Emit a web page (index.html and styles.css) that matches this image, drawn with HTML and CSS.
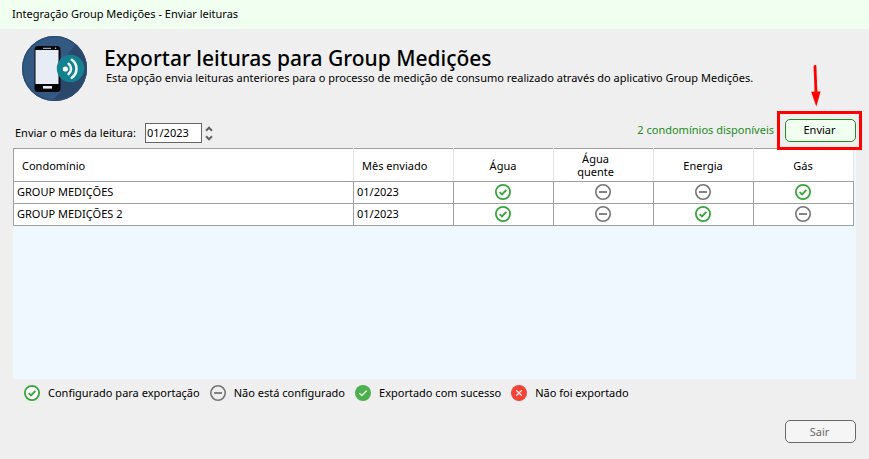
FILE: index.html
```html
<!DOCTYPE html>
<html lang="pt-BR">
<head>
<meta charset="utf-8">
<meta name="viewport" content="width=device-width, initial-scale=1">
<title>Integração Group Medições - Enviar leituras</title>
<link rel="stylesheet" href="styles.css">
</head>
<body>
<svg class="defs" aria-hidden="true">
  <symbol id="ready" viewBox="0 0 16 16"><circle cx="8" cy="8" r="7.1" fill="#fff" stroke="#36a53a" stroke-width="1.8"/><path d="M4.6 8.1 7 10.4l4.4-4.5" fill="none" stroke="#36a53a" stroke-width="1.9"/></symbol>
  <symbol id="unset" viewBox="0 0 16 16"><circle cx="8" cy="8" r="7.2" fill="none" stroke="#757575" stroke-width="1.6"/><path d="M4 8h8" stroke="#757575" stroke-width="1.8"/></symbol>
  <symbol id="done" viewBox="0 0 16 16"><circle cx="8" cy="8" r="8" fill="#4caf50"/><path d="M4.3 8.1 6.8 10.5l5-5" fill="none" stroke="#e2f5e3" stroke-width="1.3"/></symbol>
  <symbol id="failed" viewBox="0 0 16 16"><circle cx="8" cy="8" r="8" fill="#f44336"/><path d="m5.2 5.2 5.6 5.6m0-5.6-5.6 5.6" stroke="#ffe3e0" stroke-width="1.3"/></symbol>
</svg>
<header class="titlebar">Integração Group Medições - Enviar leituras</header>
<main class="window">
  <section class="intro">
    <svg class="logo" viewBox="0 0 65 65" aria-hidden="true">
      <defs><clipPath id="disc"><circle cx="32.5" cy="32.5" r="32.5"/></clipPath></defs>
      <circle cx="32.5" cy="32.5" r="32.5" fill="#335983"/>
      <path d="M38 28 54 8l14 20-6 40H28l10-12z" fill="#2b486b" clip-path="url(#disc)"/>
      <circle cx="32.5" cy="32.5" r="31.8" fill="none" stroke="#2b4d73" stroke-width="1.4"/>
      <rect x="12.5" y="10" width="26" height="46" rx="3.5" fill="#050609"/>
      <rect x="13.5" y="14" width="23" height="34" fill="#e8edf5"/>
      <path d="M21 12.3h8" stroke="#c9cdd3" stroke-width="1"/>
      <circle cx="33.5" cy="12.3" r=".8" fill="#c9cdd3"/>
      <rect x="21" y="50" width="9" height="2.6" fill="#e8edf5"/>
      <circle cx="48.5" cy="32.5" r="13.7" fill="#13818f"/>
      <circle cx="43.4" cy="33" r="2.6" fill="#fff"/>
      <path d="M46.6 27.8a6.5 6.5 0 0 1 0 10.2M49.8 23.8a11 11 0 0 1 0 18" fill="none" stroke="#eef8fa" stroke-width="2.6" stroke-linecap="round"/>
    </svg>
    <div class="heading">
      <h1>Exportar leituras para Group Medições</h1>
      <p>Esta opção envia leituras anteriores para o processo de medição de consumo realizado através do aplicativo Group Medições.</p>
    </div>
  </section>
  <section class="toolbar">
    <label for="month">Enviar o mês da leitura:</label>
    <input id="month" type="text" value="01/2023">
    <div class="spinner">
      <button type="button" aria-label="Próximo mês"><svg viewBox="0 0 8 6"><path d="m1 4.7 3-3 3 3"/></svg></button>
      <button type="button" aria-label="Mês anterior"><svg viewBox="0 0 8 6"><path d="m1 1.3 3 3 3-3"/></svg></button>
    </div>
    <span class="available">2 condomínios disponíveis</span>
    <div class="send">
      <button type="button" class="button primary">Enviar</button>
      <svg class="arrow" viewBox="0 0 10 42" aria-hidden="true"><path d="M4 1.5 5 28" stroke="#f00" stroke-width="2.8" stroke-linecap="round"/><path d="M.2 26.8 9.6 26.4 5.3 41.5z" fill="#f00"/></svg>
    </div>
  </section>
  <section class="grid">
    <table>
      <colgroup><col><col class="fixed"><col class="fixed"><col class="fixed"><col class="fixed"><col class="fixed"></colgroup>
      <thead>
        <tr><th class="left">Condomínio</th><th class="left">Mês enviado</th><th>Água</th><th class="wrap">Água quente</th><th>Energia</th><th>Gás</th></tr>
      </thead>
      <tbody>
        <tr><td>GROUP MEDIÇÕES</td><td>01/2023</td><td><svg class="icon"><use href="#ready"/></svg></td><td><svg class="icon"><use href="#unset"/></svg></td><td><svg class="icon"><use href="#unset"/></svg></td><td><svg class="icon"><use href="#ready"/></svg></td></tr>
        <tr><td>GROUP MEDIÇÕES 2</td><td>01/2023</td><td><svg class="icon"><use href="#ready"/></svg></td><td><svg class="icon"><use href="#unset"/></svg></td><td><svg class="icon"><use href="#ready"/></svg></td><td><svg class="icon"><use href="#unset"/></svg></td></tr>
      </tbody>
    </table>
  </section>
  <ul class="legend">
    <li><svg class="icon"><use href="#ready"/></svg>Configurado para exportação</li>
    <li><svg class="icon"><use href="#unset"/></svg>Não está configurado</li>
    <li><svg class="icon"><use href="#done"/></svg>Exportado com sucesso</li>
    <li><svg class="icon"><use href="#failed"/></svg>Não foi exportado</li>
  </ul>
  <footer class="footer"><button type="button" class="button">Sair</button></footer>
</main>
</body>
</html>
```
FILE: styles.css
```css
* { box-sizing: border-box; }

body {
  margin: 0;
  min-height: 100vh;
  display: flex;
  flex-direction: column;
  background: #efefef;
  color: #000;
  font: 11px/14px "Noto Sans", "Open Sans", sans-serif;
}

button, input { font: inherit; color: inherit; }

.defs { position: absolute; width: 0; height: 0; }

.titlebar {
  padding: 7px 12px 8px;
  background: #f0fff0;
}

.window {
  flex: 1;
  display: flex;
  flex-direction: column;
  padding: 7px 13px 16px;
}

.intro {
  display: flex;
  gap: 17px;
  padding-left: 9px;
}

.logo { width: 65px; height: 65px; flex: none; }

.heading { padding-top: 9px; }

h1 {
  margin: 0;
  font-size: 21px;
  line-height: 26px;
  font-weight: 500;
}

p { margin: 0; padding-left: 2px; }

.toolbar {
  display: flex;
  align-items: center;
  height: 47px;
  padding: 17px 0 0 2px;
}

#month {
  width: 57px;
  height: 20px;
  margin-left: 9px;
  padding: 0 1px 2px;
  border: 1px solid #646464;
  background: #fff;
}

.spinner {
  display: flex;
  flex-direction: column;
  gap: 3px;
  margin-left: 3px;
}

.spinner button {
  display: block;
  padding: 0;
  border: 0;
  background: none;
  line-height: 0;
}

.spinner svg { width: 8px; height: 6px; }
.spinner path { fill: none; stroke: #646464; stroke-width: 2; }

.available {
  margin: 0 11px 0 auto;
  padding-bottom: 6px;
  color: #228b22;
}

.send {
  position: relative;
  padding-bottom: 6px;
}

.send::after {
  content: "";
  position: absolute;
  inset: -8px -6px -2px -8px;
  border: 3px solid #f00;
  pointer-events: none;
}

.arrow {
  position: absolute;
  left: 26px;
  bottom: 41px;
  width: 10px;
  height: 42px;
}

.button {
  display: block;
  width: 71px;
  height: 23px;
  padding: 0 2px 0 0;
  border: 1px solid #696969;
  border-radius: 5px;
  background: #f5f5f5;
  color: #696969;
}

.primary {
  border-color: #228b22;
  background: #f0fff0;
  color: #000;
}

.grid {
  flex: 1;
  background: #f0f8ff;
}

table {
  width: calc(100% - 2px);
  table-layout: fixed;
  border-collapse: collapse;
  background: #fff;
}

.fixed { width: 100px; }

th {
  height: 33px;
  padding: 1px 9px 0 8px;
  border: 1px solid #a0a0a0;
  border-right-color: #e5e5e5;
  border-left-color: #e5e5e5;
  font-weight: 400;
  line-height: 13px;
}

th:first-child { border-left-color: #a0a0a0; }
.left { padding-right: 0; text-align: left; }
.wrap { padding: 0 32px 0 16px; }

td {
  height: 22px;
  padding: 0 4px 1px 3px;
  border: 1px solid #a0a0a0;
}

.icon { display: block; flex: none; width: 16px; height: 16px; }
td .icon { margin: 0 auto; }

.legend {
  display: flex;
  gap: 10px;
  margin: 0;
  padding: 6px 11px 0;
  list-style: none;
}

.legend li { display: flex; align-items: center; gap: 8px; }

.footer {
  display: flex;
  justify-content: flex-end;
  padding-top: 19px;
}
```
